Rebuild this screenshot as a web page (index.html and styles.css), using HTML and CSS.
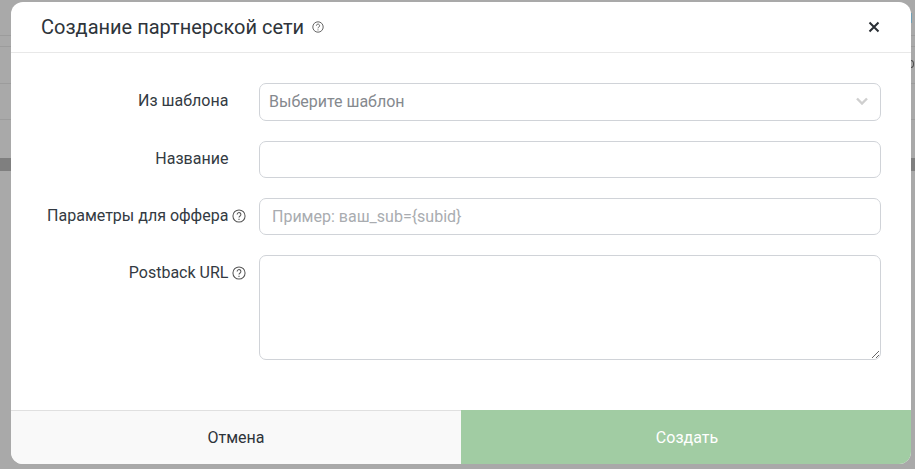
FILE: index.html
```html
<!DOCTYPE html>
<html lang="ru">
<head>
<meta charset="utf-8">
<title>Создание партнерской сети</title>
<link rel="stylesheet" href="styles.css">
</head>
<body>
<div class="backdrop">
  <div class="bg-line bg-line-1"></div>
  <div class="bg-line bg-line-2"></div>
  <div class="bg-line bg-line-3"></div>
  <div class="bg-line bg-line-4"></div>
  <div class="bg-band"></div>
  <div class="bg-accent"></div>
  <div class="bg-ring"></div>
</div>
<div class="modal">
  <header class="modal-head">
    <h1 class="modal-title">Создание партнерской сети</h1>
    <svg class="help help-title" viewBox="0 0 12 12"><circle cx="6" cy="6" r="5.2"/><path d="M4.4 4.7a1.6 1.6 0 1 1 2.5 1.3c-.6.4-.9.7-.9 1.3"/><path d="M6 8.4v1"/></svg>
    <svg class="close" viewBox="0 0 12 12"><path d="M1.5 1.5l9 9M10.5 1.5l-9 9"/></svg>
  </header>
  <form class="modal-body">
    <div class="row row-first">
      <label class="label label-first">Из шаблона</label>
      <div class="control select"><span class="select-text">Выберите шаблон</span>
        <svg class="chevron" viewBox="0 0 12 8"><path d="M1 1.5l5 5 5-5"/></svg>
      </div>
    </div>
    <div class="row">
      <label class="label">Название</label>
      <input class="control" type="text">
    </div>
    <div class="row">
      <label class="label">Параметры для оффера<svg class="help help-label" viewBox="0 0 12 12"><circle cx="6" cy="6" r="5.2"/><path d="M4.4 4.7a1.6 1.6 0 1 1 2.5 1.3c-.6.4-.9.7-.9 1.3"/><path d="M6 8.4v1"/></svg></label>
      <input class="control" type="text" placeholder="Пример: ваш_sub={subid}">
    </div>
    <div class="row">
      <label class="label label-top">Postback URL<svg class="help help-label" viewBox="0 0 12 12"><circle cx="6" cy="6" r="5.2"/><path d="M4.4 4.7a1.6 1.6 0 1 1 2.5 1.3c-.6.4-.9.7-.9 1.3"/><path d="M6 8.4v1"/></svg></label>
      <textarea class="control area"></textarea>
    </div>
  </form>
  <footer class="modal-foot">
    <button class="btn btn-cancel" type="button">Отмена</button>
    <button class="btn btn-create" type="button">Создать</button>
  </footer>
</div>
</body>
</html>
```
FILE: styles.css
```css
* { box-sizing: border-box; }
html, body { margin: 0; height: 100%; overflow: hidden; }
body {
  background: #a9a9a9;
  font-family: Roboto, "Noto Sans", sans-serif;
  color: #333a42;
  padding: 2px 0 0 11px;
}
.backdrop { position: absolute; inset: 0; }
.bg-line { position: absolute; left: 0; right: 0; height: 1px; background: #9c9c9c; }
.bg-line-1 { top: 35px; }
.bg-line-2 { top: 46px; }
.bg-line-3 { top: 83px; }
.bg-line-4 { top: 119px; }
.bg-band { position: absolute; left: 0; right: 0; top: 158px; height: 13px; background: #7f7f7f; }
.bg-accent { position: absolute; left: 911px; top: 13px; width: 1px; height: 10px; background: #6f9fb5; }
.bg-ring { position: absolute; left: 908px; top: 60px; width: 6px; height: 8px; border: 1px solid #4a4a4a; border-radius: 50%; }
.modal {
  position: relative;
  width: 900px;
  height: 462px;
  background: #fff;
  border-radius: 12px;
  overflow: hidden;
  display: flex;
  flex-direction: column;
}
.modal-head {
  height: 51px;
  flex: none;
  border-bottom: 1px solid #e8e8e8;
  display: flex;
  align-items: center;
  padding: 0 30px;
}
.modal-title { margin: 0; font-size: 20px; font-weight: 400; color: #2e343a; }
.help { width: 12px; height: 12px; margin-left: 8px; flex: none; fill: none; stroke: #555; stroke-width: .9; }
.help-label { width: 14px; height: 14px; margin-left: 4px; margin-right: -18px; }
.close { width: 12px; height: 12px; margin-left: auto; margin-right: 1px; fill: none; stroke: #2a2f35; stroke-width: 2; }
.modal-body { flex: 1; display: flex; flex-direction: column; gap: 20px; padding: 30px 30px 0 0; }
.row { display: flex; align-items: center; }
.row-first { height: 38px; }
.label {
  width: 217.4px;
  margin-right: 30.6px;
  font-size: 16px;
  color: #333a42;
  white-space: nowrap;
  display: flex;
  justify-content: flex-end;
  align-items: center;
  position: relative;
  top: -1px;
}
.label-first { top: -2px; }
.control {
  flex: 1;
  height: 37px;
  min-width: 0;
  border: 1px solid #d0d3d8;
  border-radius: 7px;
  background: #fff;
  padding: 0 12px;
  font: 16px Roboto, sans-serif;
  color: #333a42;
  outline: 0;
}
.control::placeholder { color: #a9acb0; opacity: 1; }
.select { height: 38px; padding: 0 9px 2px; display: flex; align-items: center; justify-content: space-between; color: #85898e; }
.chevron { width: 12px; height: 8px; fill: none; stroke: #cfcfcf; stroke-width: 2.4; margin-right: 3px; }
.area { height: 105px; resize: vertical; display: block; }
.row:has(.area) { align-items: flex-start; }
.label-top { margin-top: 9px; }
.modal-foot { height: 54px; flex: none; display: flex; }
.btn { border: 0; margin: 0; padding: 0; font: 16px Roboto, sans-serif; }
.btn-cancel { width: 450px; background: #f9f9f9; color: #2e343a; border-top: 1px solid #e0e0e0; }
.btn-create { width: 450px; background: #a1cca3; color: #fff; padding-left: 2px; }
```
